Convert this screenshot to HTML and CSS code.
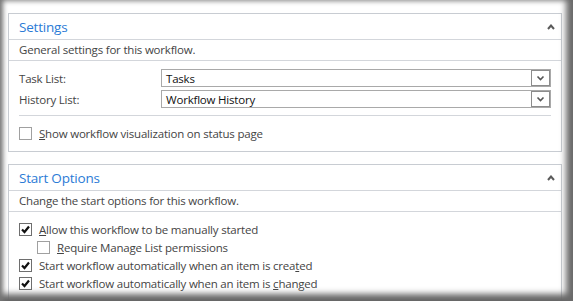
FILE: index.html
```html
<!DOCTYPE html>
<html lang="en">
<head>
    <meta charset="UTF-8">
    <title>Workflow Settings</title>
    <link rel="stylesheet" href="styles.css">
</head>
<body>
<div class="window">
    <!-- Settings -->
    <div class="panel">
        <div class="panel-header">
            <span class="panel-title">Settings</span>
            <svg class="collapse" width="8" height="6" viewBox="0 0 8 6"><polyline points="1,5 4,1.5 7,5" fill="none" stroke="#5a5a5a" stroke-width="2"/></svg>
        </div>
        <div class="panel-desc">General settings for this workflow.</div>
        <div class="panel-body">
            <div class="field-row">
                <label class="field-label">Task List:</label>
                <div class="select">
                    <span class="select-value">Tasks</span>
                    <span class="select-btn"><svg width="9" height="6" viewBox="0 0 9 6"><polyline points="1.5,1.5 4.5,4.5 7.5,1.5" fill="none" stroke="#555" stroke-width="1.6"/></svg></span>
                </div>
            </div>
            <div class="field-row">
                <label class="field-label">History List:</label>
                <div class="select">
                    <span class="select-value">Workflow History</span>
                    <span class="select-btn"><svg width="9" height="6" viewBox="0 0 9 6"><polyline points="1.5,1.5 4.5,4.5 7.5,1.5" fill="none" stroke="#555" stroke-width="1.6"/></svg></span>
                </div>
            </div>
            <div class="separator"></div>
            <div class="check-row">
                <span class="checkbox"></span>
                <span class="check-label"><u>S</u>how workflow visualization on status page</span>
            </div>
        </div>
    </div>

    <!-- Start Options -->
    <div class="panel">
        <div class="panel-header">
            <span class="panel-title">Start Options</span>
            <svg class="collapse" width="8" height="6" viewBox="0 0 8 6"><polyline points="1,5 4,1.5 7,5" fill="none" stroke="#5a5a5a" stroke-width="2"/></svg>
        </div>
        <div class="panel-desc">Change the start options for this workflow.</div>
        <div class="panel-body check-list">
            <div class="check-row">
                <span class="checkbox checked"><svg width="11" height="11" viewBox="0 0 11 11"><polyline points="2,5.5 4.5,8 9,2.5" fill="none" stroke="#111" stroke-width="2.2"/></svg></span>
                <span class="check-label"><u>A</u>llow this workflow to be manually started</span>
            </div>
            <div class="check-row indent">
                <span class="checkbox"></span>
                <span class="check-label"><u>R</u>equire Manage List permissions</span>
            </div>
            <div class="check-row">
                <span class="checkbox checked"><svg width="11" height="11" viewBox="0 0 11 11"><polyline points="2,5.5 4.5,8 9,2.5" fill="none" stroke="#111" stroke-width="2.2"/></svg></span>
                <span class="check-label">Start workflow automatically when an item is crea<u>t</u>ed</span>
            </div>
            <div class="check-row">
                <span class="checkbox checked"><svg width="11" height="11" viewBox="0 0 11 11"><polyline points="2,5.5 4.5,8 9,2.5" fill="none" stroke="#111" stroke-width="2.2"/></svg></span>
                <span class="check-label">Start workflow automatically when an item is <u>c</u>hanged</span>
            </div>
        </div>
    </div>
</div>
</body>
</html>
```

FILE: styles.css
```css
body {
    margin: 0;
    font-family: "Open Sans", "Noto Sans", sans-serif;
    font-size: 11.5px;
    letter-spacing: -0.2px;
    color: #444;
}
.window {
    position: relative;
    width: 573px;
    height: 301px;
    box-sizing: border-box;
    padding: 13px 11px 0 8px;
    overflow: hidden;
    background: #fff;
}
/* window shadow lies over the panels */
.window::after {
    content: "";
    position: absolute;
    top: 0;
    left: 0;
    right: 0;
    bottom: 0;
    pointer-events: none;
    box-shadow: inset 6px 0 5px -3px #777,
                inset -11px 0 6px -4px #6a6a6a,
                inset 0 -11px 6px -4px #666,
                inset 0 5px 4px -3px #b5b5b5;
}
.panel {
    border: 1px solid #c8ccd2;
    background: #fff;
    margin-bottom: 12px;
}
.panel-header {
    height: 25px;
    display: flex;
    align-items: center;
    justify-content: space-between;
    padding: 0 6px 0 10px;
    border-bottom: 1px solid #d3d6db;
}
.panel-title {
    font-size: 13.5px;
    letter-spacing: -0.2px;
    color: #2b7bd6;
}
.panel-desc {
    height: 20px;
    line-height: 20px;
    padding: 0 10px;
    border-bottom: 1px solid #d3d6db;
}
.panel-body {
    padding: 8px 10px 11px 10px;
}
.field-row {
    display: flex;
    align-items: center;
    margin-bottom: 3px;
}
.field-label {
    width: 142px;
}
.select {
    flex: 1;
    height: 18px;
    box-sizing: border-box;
    border: 1px solid #a9a9a9;
    display: flex;
    align-items: center;
    justify-content: space-between;
    padding: 0 0 0 4px;
    color: #111;
}
.select-btn {
    width: 19px;
    height: 16px;
    border: 1px solid #8c8c8c;
    box-sizing: border-box;
    display: flex;
    align-items: center;
    justify-content: center;
}
.separator {
    border-top: 1px solid #d3d6db;
    margin: 7px 0 11px 0;
}
.check-row {
    display: flex;
    align-items: center;
    height: 13px;
}
.check-list .check-row {
    margin-bottom: 5px;
}
.check-list {
    padding-top: 11px;
}
.check-row.indent {
    padding-left: 18px;
}
.checkbox {
    width: 13px;
    height: 13px;
    box-sizing: border-box;
    border: 1px solid #a0a0a0;
    background: #fff;
    margin-right: 7px;
    display: flex;
    align-items: center;
    justify-content: center;
}
.checkbox.checked {
    border-color: #6e6e6e;
}
```
